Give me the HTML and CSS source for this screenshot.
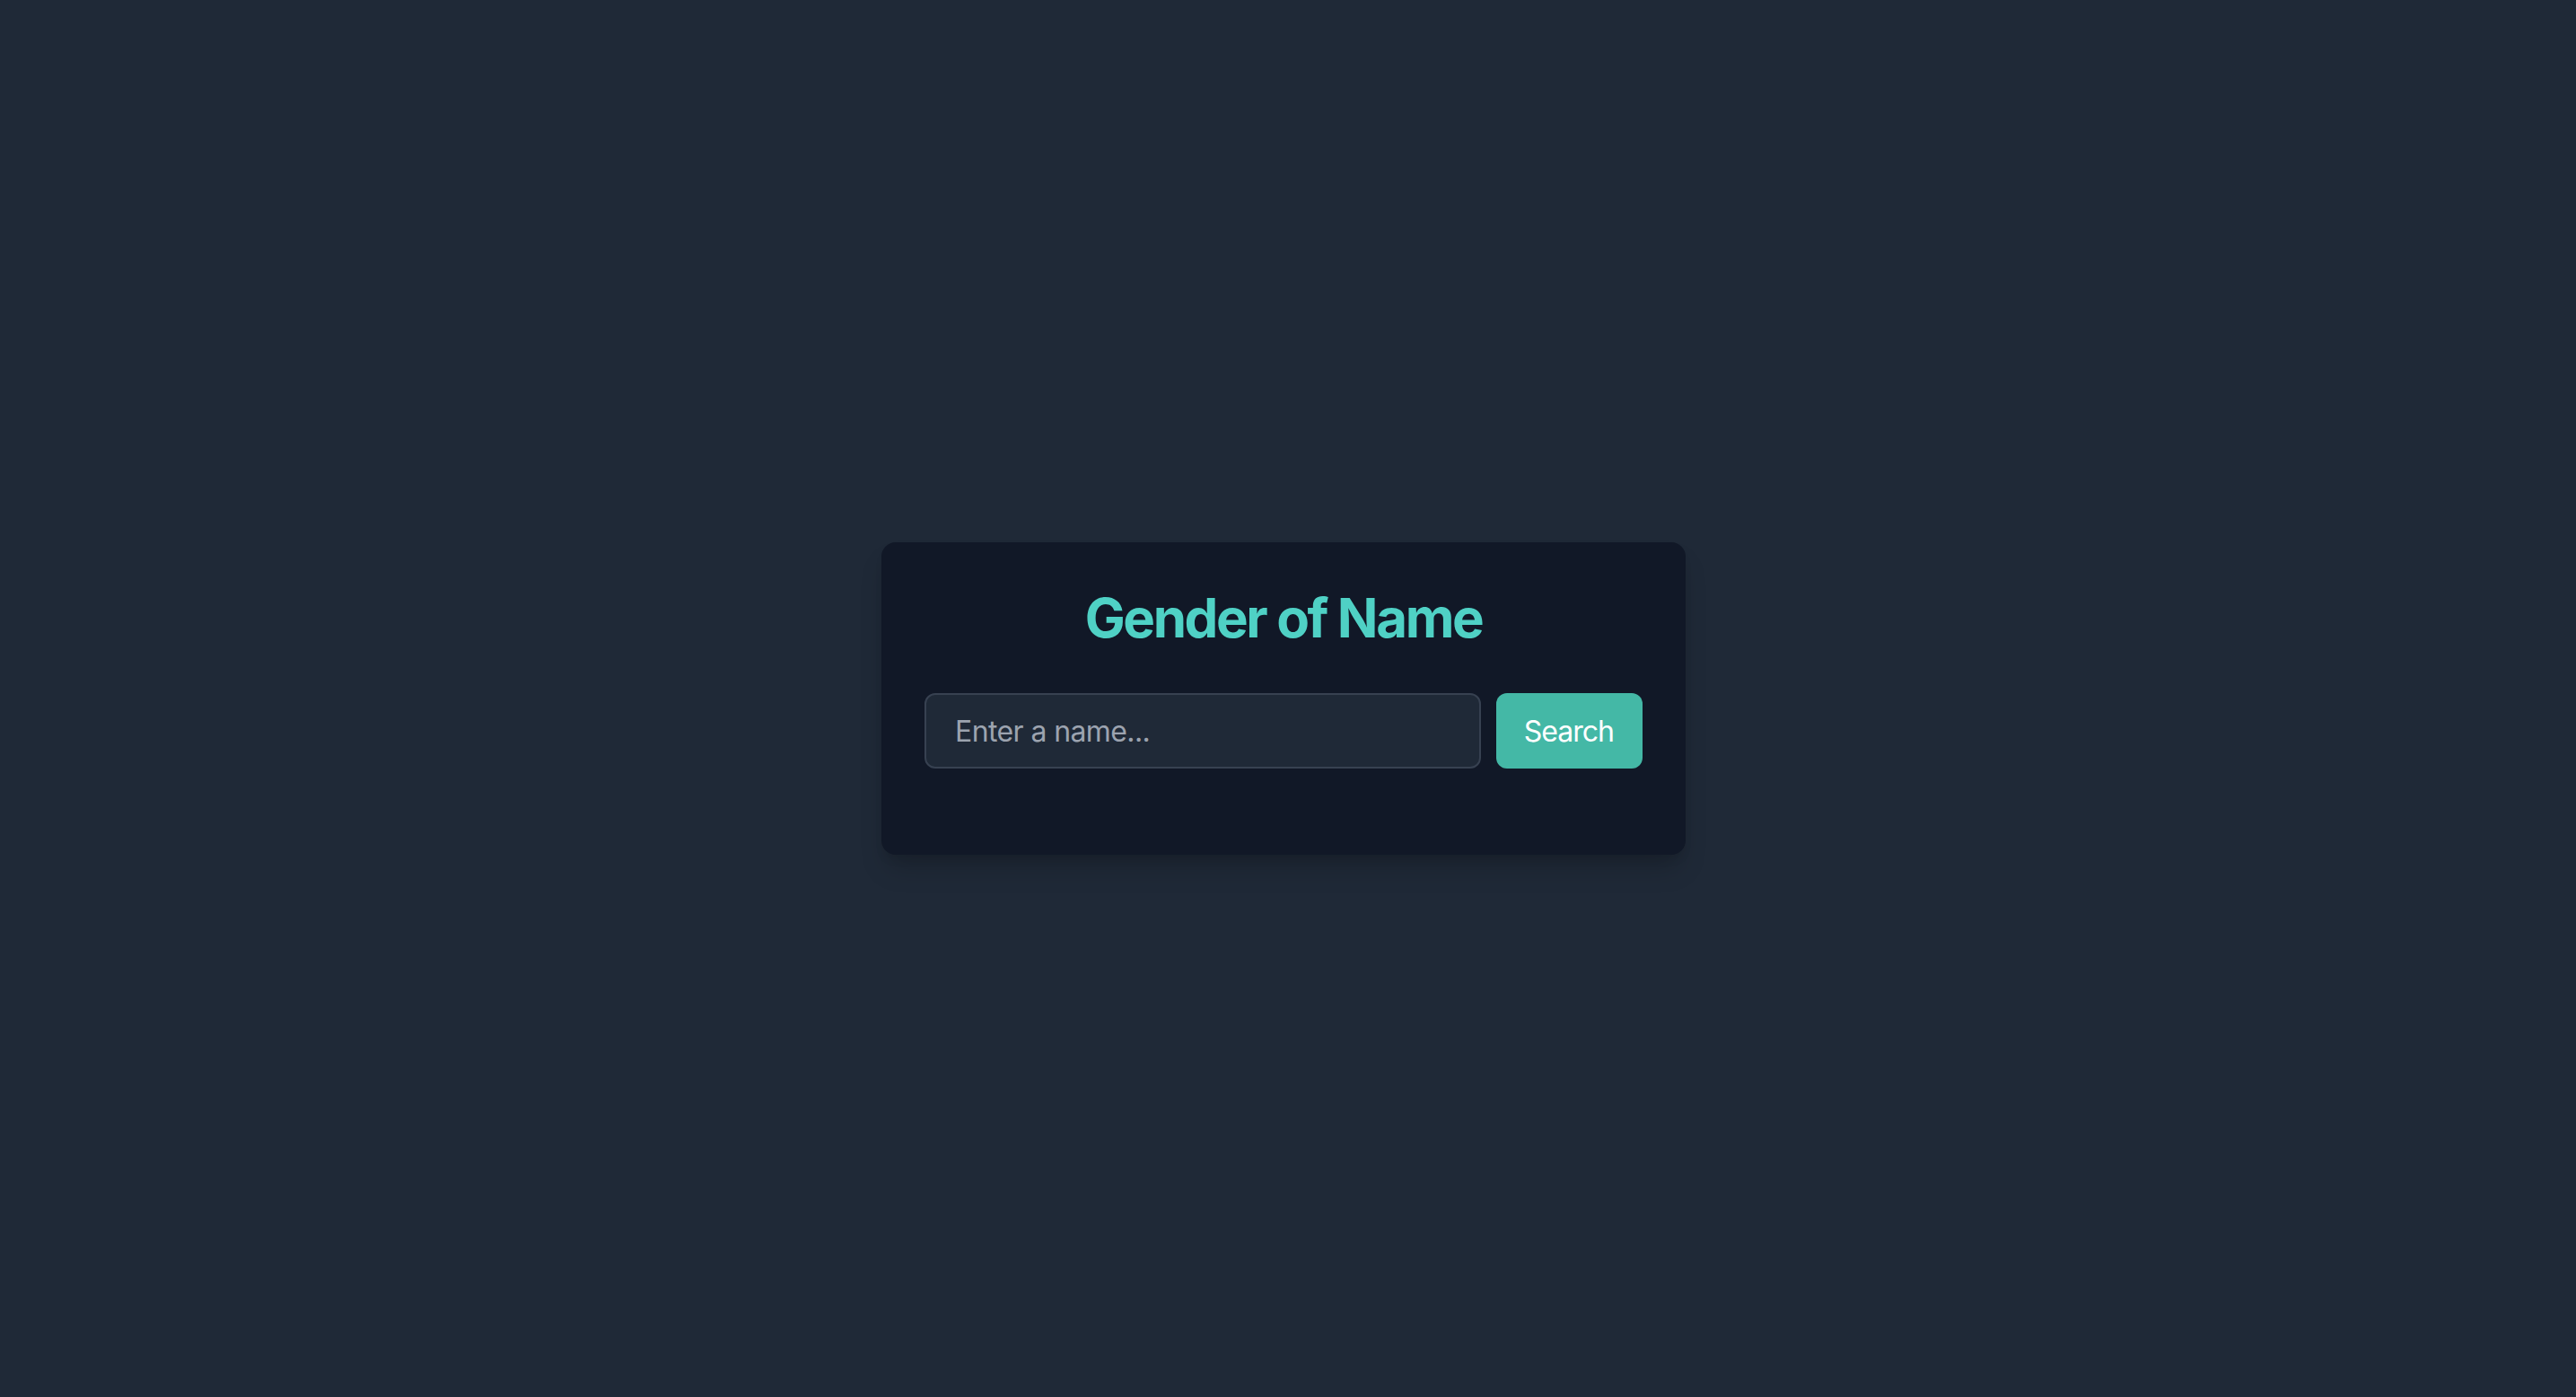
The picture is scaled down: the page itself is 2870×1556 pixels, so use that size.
FILE: index.html
```html
<!DOCTYPE html>
<html lang="en">
<head>
<meta charset="utf-8">
<title>Gender of Name</title>
<link rel="stylesheet" href="styles.css">
</head>
<body>
<main class="page">
  <section class="card">
    <h1 class="title">Gender of Name</h1>
    <form class="search-form" onsubmit="return false;">
      <input class="name-input" type="text" placeholder="Enter a name...">
      <button class="search-btn" type="submit">Search</button>
    </form>
  </section>
</main>
</body>
</html>
```

FILE: styles.css
```css
html, body {
  margin: 0;
  padding: 0;
  height: 100%;
}
body {
  background: #1f2937;
  font-family: Inter, "Noto Sans", "Liberation Sans", sans-serif;
}
.page {
  min-height: 100vh;
  display: flex;
  align-items: center;
  justify-content: center;
  padding-right: 10px;
  box-sizing: border-box;
}
.card {
  width: 896px;
  box-sizing: border-box;
  background: #111827;
  border-radius: 16px;
  padding: 48px 48px 96px;
  box-shadow: 0 20px 30px -6px rgba(0,0,0,0.18), 0 8px 12px -4px rgba(0,0,0,0.1);
}
.title {
  margin: 0 0 48px;
  text-align: center;
  font-size: 60px;
  line-height: 72px;
  font-weight: 700;
  letter-spacing: -2.4px;
  color: #4fd1c5;
}
.search-form {
  display: flex;
  gap: 17px;
  margin: 0;
}
.name-input {
  flex: 1;
  min-width: 0;
  height: 84px;
  box-sizing: border-box;
  padding: 0 32px;
  background: #1f2937;
  border: 2px solid #374151;
  border-radius: 12px;
  font-family: inherit;
  font-size: 32px;
  letter-spacing: -0.6px;
  color: #e5e7eb;
  outline: none;
}
.name-input::placeholder {
  color: #9ca3af;
}
.search-btn {
  flex: none;
  height: 84px;
  padding: 0 32px 0 31px;
  border: none;
  border-radius: 12px;
  background: #44b8a6;
  color: #ffffff;
  font-family: inherit;
  font-size: 32px;
  font-weight: 400;
  letter-spacing: -1px;
  cursor: pointer;
}
```
